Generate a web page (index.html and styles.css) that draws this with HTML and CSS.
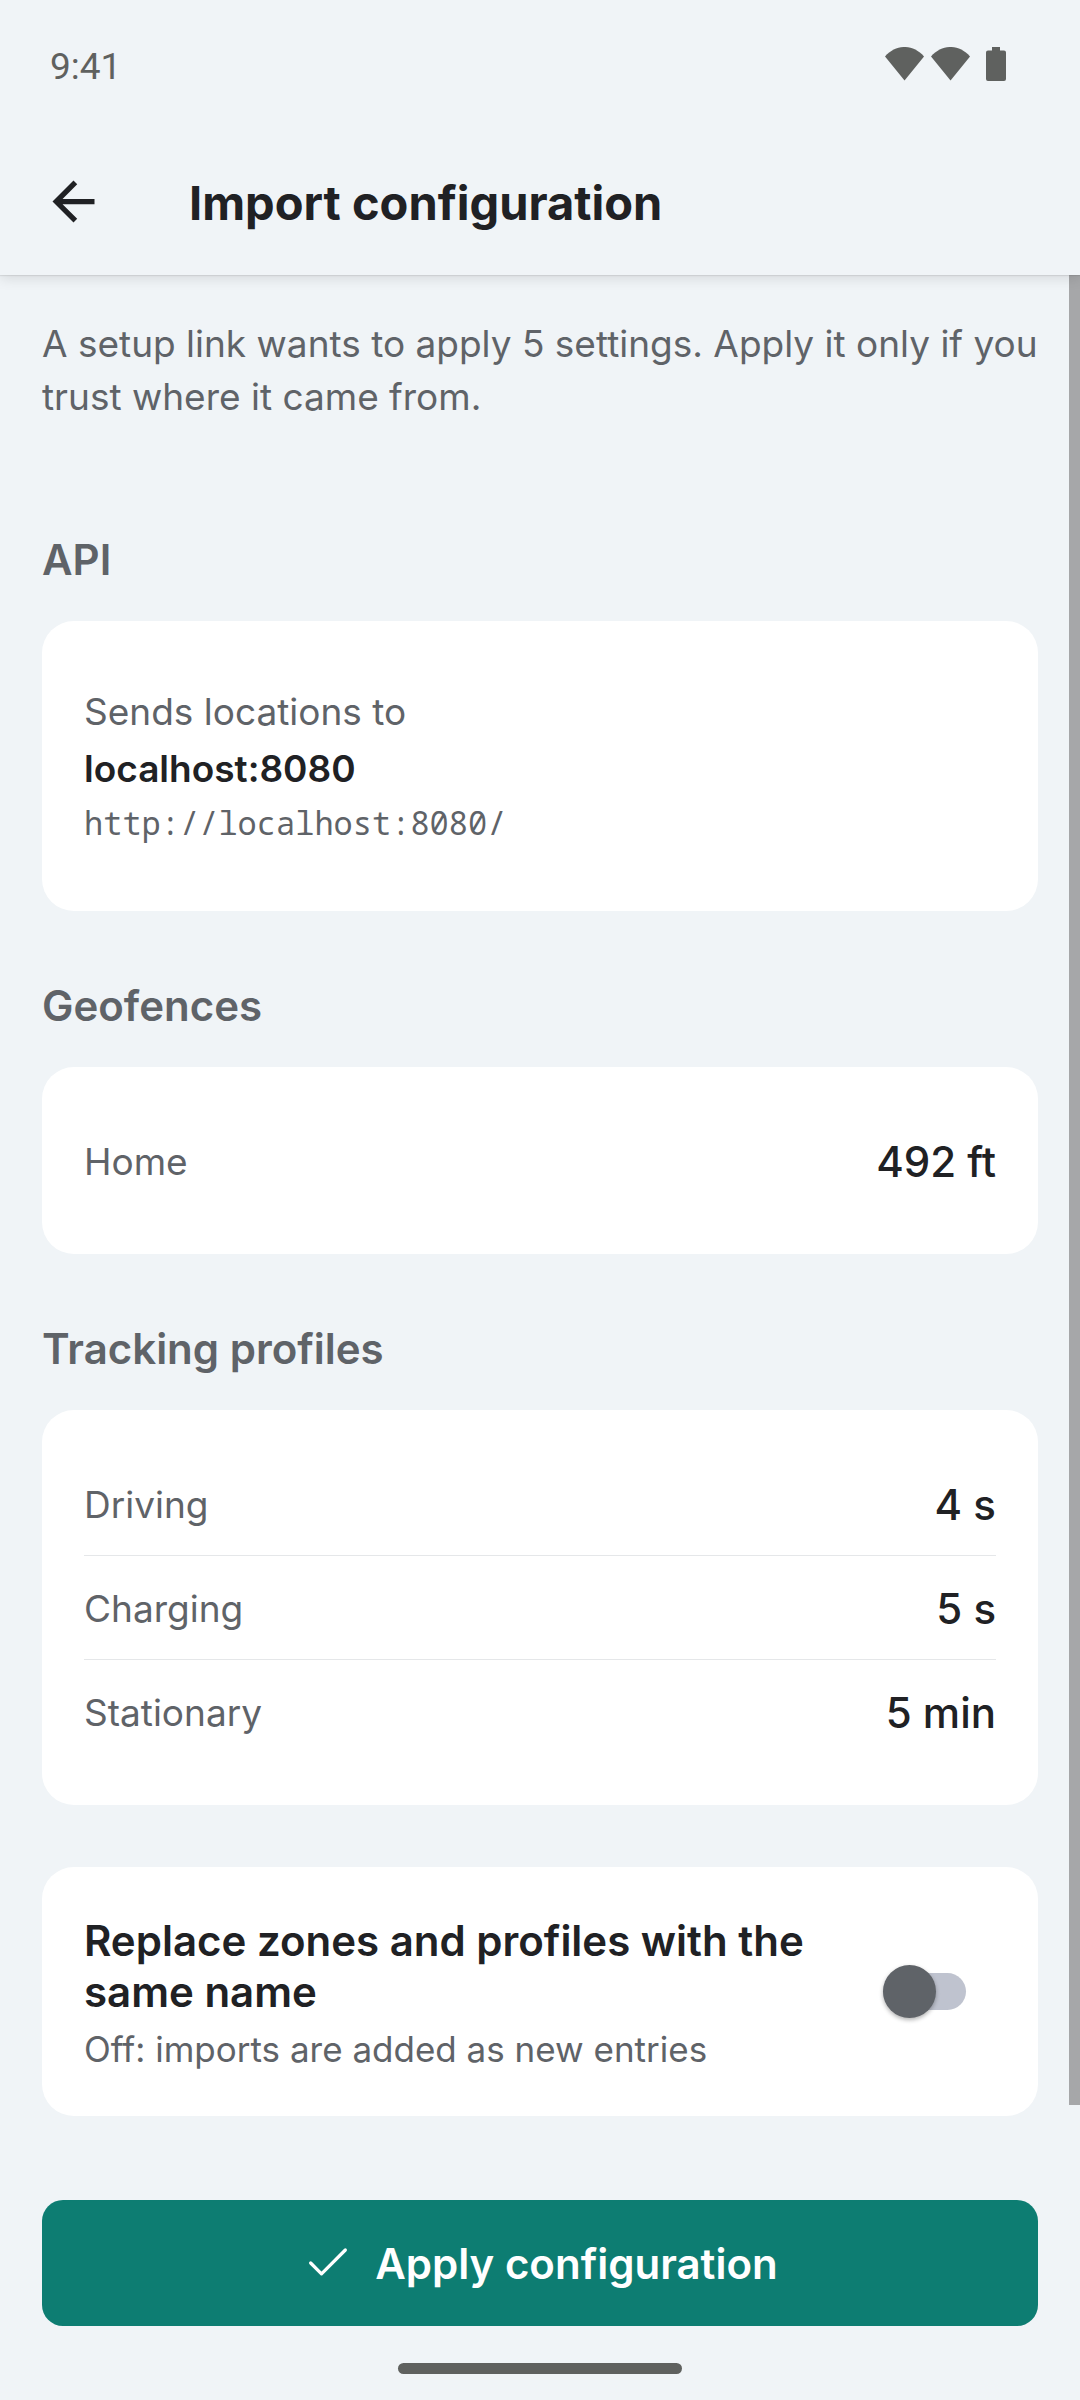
FILE: index.html
```html
<!DOCTYPE html>
<html lang="en">
<head>
  <meta charset="utf-8">
  <meta name="viewport" content="width=device-width, initial-scale=1">
  <title>Import configuration</title>
  <link rel="stylesheet" href="styles.css">
</head>
<body>
  <div class="status-bar">
    <span class="status-time">9:41</span>
    <div class="status-icons">
      <svg class="status-signal" viewBox="0 0 39 34" aria-hidden="true"><path d="M0 9.500C11-3.200 28-3.200 39 9.500L19.500 33.500Z"/></svg>
      <svg class="status-signal" viewBox="0 0 39 34" aria-hidden="true"><path d="M0 9.500C11-3.200 28-3.200 39 9.500L19.500 33.500Z"/></svg>
      <svg class="status-battery" viewBox="0 0 20 34" aria-hidden="true"><path d="M6 0H14V3.500H18Q20 3.500 20 5.500V32Q20 34 18 34H2Q0 34 0 32V5.500Q0 3.500 2 3.500H6Z"/></svg>
    </div>
  </div>

  <header class="app-bar">
    <button class="back-button" type="button" aria-label="Back">
      <svg class="back-icon" viewBox="0 0 24 24" aria-hidden="true"><path d="M20 11H7.830l5.590-5.590L12 4l-8 8 8 8 1.410-1.410L7.830 13H20v-2z"/></svg>
    </button>
    <h1 class="app-title">Import configuration</h1>
  </header>

  <main class="content">
    <div class="scroll-thumb"></div>
    <p class="intro">A setup link wants to apply 5 settings. Apply it only if you trust where it came from.</p>

    <section class="section">
      <h2 class="section-title">API</h2>
      <div class="card endpoint">
        <p class="label">Sends locations to</p>
        <p class="endpoint-host">localhost:8080</p>
        <p class="endpoint-url">http://localhost:8080/</p>
      </div>
    </section>

    <section class="section">
      <h2 class="section-title">Geofences</h2>
      <dl class="card">
        <div class="row"><dt class="label">Home</dt><dd class="value">492 ft</dd></div>
      </dl>
    </section>

    <section class="section">
      <h2 class="section-title">Tracking profiles</h2>
      <dl class="card">
        <div class="row"><dt class="label">Driving</dt><dd class="value">4 s</dd></div>
        <div class="row"><dt class="label">Charging</dt><dd class="value">5 s</dd></div>
        <div class="row"><dt class="label">Stationary</dt><dd class="value">5 min</dd></div>
      </dl>
    </section>

    <div class="card option">
      <div class="option-text">
        <label class="option-title" for="replace">Replace zones and profiles with the same name</label>
        <p class="option-hint" id="replace-hint">Off: imports are added as new entries</p>
      </div>
      <input class="switch" type="checkbox" role="switch" id="replace" aria-describedby="replace-hint">
    </div>
  </main>

  <footer class="actions">
    <button class="apply-button" type="button">
      <svg class="apply-icon" viewBox="0 0 24 24" aria-hidden="true"><path d="M20 6 9 17l-5-5"/></svg>
      Apply configuration
    </button>
    <div class="home-indicator"></div>
  </footer>
</body>
</html>
```

FILE: styles.css
```css
:root {
  --bg: #f0f4f7;
  --card: #ffffff;
  --text: #202124;
  --muted: #5f6368;
  --system: #5f615f;
  --primary: #0d7d72;
  --divider: #e5e7e9;
  --space: 42px;
}

* {
  box-sizing: border-box;
}

body {
  margin: 0;
  min-height: 100vh;
  display: flex;
  flex-direction: column;
  background: var(--bg);
  color: var(--text);
  font-family: Inter, "Liberation Sans", sans-serif;
  font-size: 37px;
  line-height: 45px;
}

h1, h2, p, dl, dd {
  margin: 0;
}

button {
  border: 0;
  padding: 0;
  font: inherit;
  cursor: pointer;
}

.status-bar {
  display: flex;
  justify-content: space-between;
  align-items: center;
  height: 128px;
  padding: 0 74px 0 50px;
  color: var(--system);
  font-family: Roboto, sans-serif;
}

.status-time {
  padding-top: 4px;
}

.status-icons {
  display: flex;
  gap: 7px;
  fill: currentColor;
}

.status-signal {
  width: 39px;
  height: 34px;
}

.status-battery {
  width: 20px;
  height: 34px;
  margin-left: 9px;
}

.app-bar {
  position: relative;
  z-index: 1;
  display: flex;
  align-items: center;
  gap: 84px;
  height: 147px;
  padding: 0 var(--space);
  background: var(--bg);
  box-shadow: 0 1px 1px rgba(0, 0, 0, 0.08), 0 4px 12px rgba(0, 0, 0, 0.1);
  clip-path: inset(0 0 -24px);
}

.back-button {
  display: flex;
  background: none;
  color: var(--text);
}

.back-icon {
  width: 63px;
  height: 63px;
  fill: currentColor;
}

.app-title {
  padding-top: 2px;
  font-size: 47px;
  line-height: 57px;
  font-weight: 700;
}

.content {
  position: relative;
  flex: 1;
  padding: var(--space);
}

.scroll-thumb {
  position: absolute;
  top: 0;
  right: 0;
  width: 11px;
  height: calc(100% - 53px);
  background: #a6a7a9;
}

.intro {
  margin-bottom: 111px;
  color: var(--muted);
  line-height: 53px;
}

.section {
  margin-bottom: 69px;
}

.section:last-of-type {
  margin-bottom: 62px;
}

.section-title {
  margin-bottom: 36px;
  color: var(--muted);
  font-size: 42px;
  line-height: 51px;
  font-weight: 600;
}

.card {
  padding: var(--space);
  border-radius: 32px;
  background: var(--card);
}

.label {
  color: var(--muted);
}

.endpoint {
  padding-top: 62px;
  padding-bottom: 63px;
  line-height: 57px;
}

.endpoint-host {
  font-weight: 600;
}

.endpoint-url {
  color: var(--muted);
  font-family: "Noto Sans Mono", "Droid Sans Mono", "Liberation Mono", monospace;
  font-size: 32px;
  line-height: 51px;
}

.row {
  display: flex;
  justify-content: space-between;
  align-items: center;
  padding: 27px 0 25px;
}

.row + .row {
  border-top: 1px solid var(--divider);
}

.value {
  font-size: 42px;
  line-height: 51px;
  font-weight: 500;
}

.option {
  display: flex;
  align-items: center;
  justify-content: space-between;
  gap: var(--space);
  padding: 48px 72px 46px 42px;
}

.option-text {
  display: flex;
  flex-direction: column;
  gap: 12px;
}

.option-title {
  font-size: 42px;
  line-height: 51px;
  font-weight: 600;
}

.option-hint {
  color: var(--muted);
  font-size: 35px;
  line-height: 41px;
}

.switch {
  appearance: none;
  flex: none;
  display: grid;
  align-items: center;
  width: 83px;
  height: 53px;
  margin: 0 0 2px;
}

.switch::before,
.switch::after {
  content: "";
  grid-area: 1 / 1;
}

.switch::before {
  height: 37px;
  border-radius: 19px;
  background: #bfc3cf;
}

.switch::after {
  width: 53px;
  height: 53px;
  border-radius: 50%;
  background: var(--muted);
  box-shadow: 0 2px 4px rgba(0, 0, 0, 0.3);
}

.switch:checked::before {
  background: #9fcbc7;
}

.switch:checked::after {
  justify-self: end;
  background: var(--primary);
}

.actions {
  display: flex;
  flex-direction: column;
  gap: 37px;
  padding: 42px 42px 26px;
}

.apply-button {
  display: flex;
  align-items: center;
  justify-content: center;
  gap: 21px;
  height: 126px;
  border-radius: 21px;
  background: var(--primary);
  color: #ffffff;
  font-size: 42px;
  line-height: 51px;
  font-weight: 600;
}

.apply-icon {
  width: 52px;
  height: 52px;
  fill: none;
  stroke: currentColor;
  stroke-width: 1.5;
  stroke-linecap: round;
  stroke-linejoin: round;
}

.home-indicator {
  align-self: center;
  width: 284px;
  height: 11px;
  border-radius: 6px;
  background: var(--system);
}
```
